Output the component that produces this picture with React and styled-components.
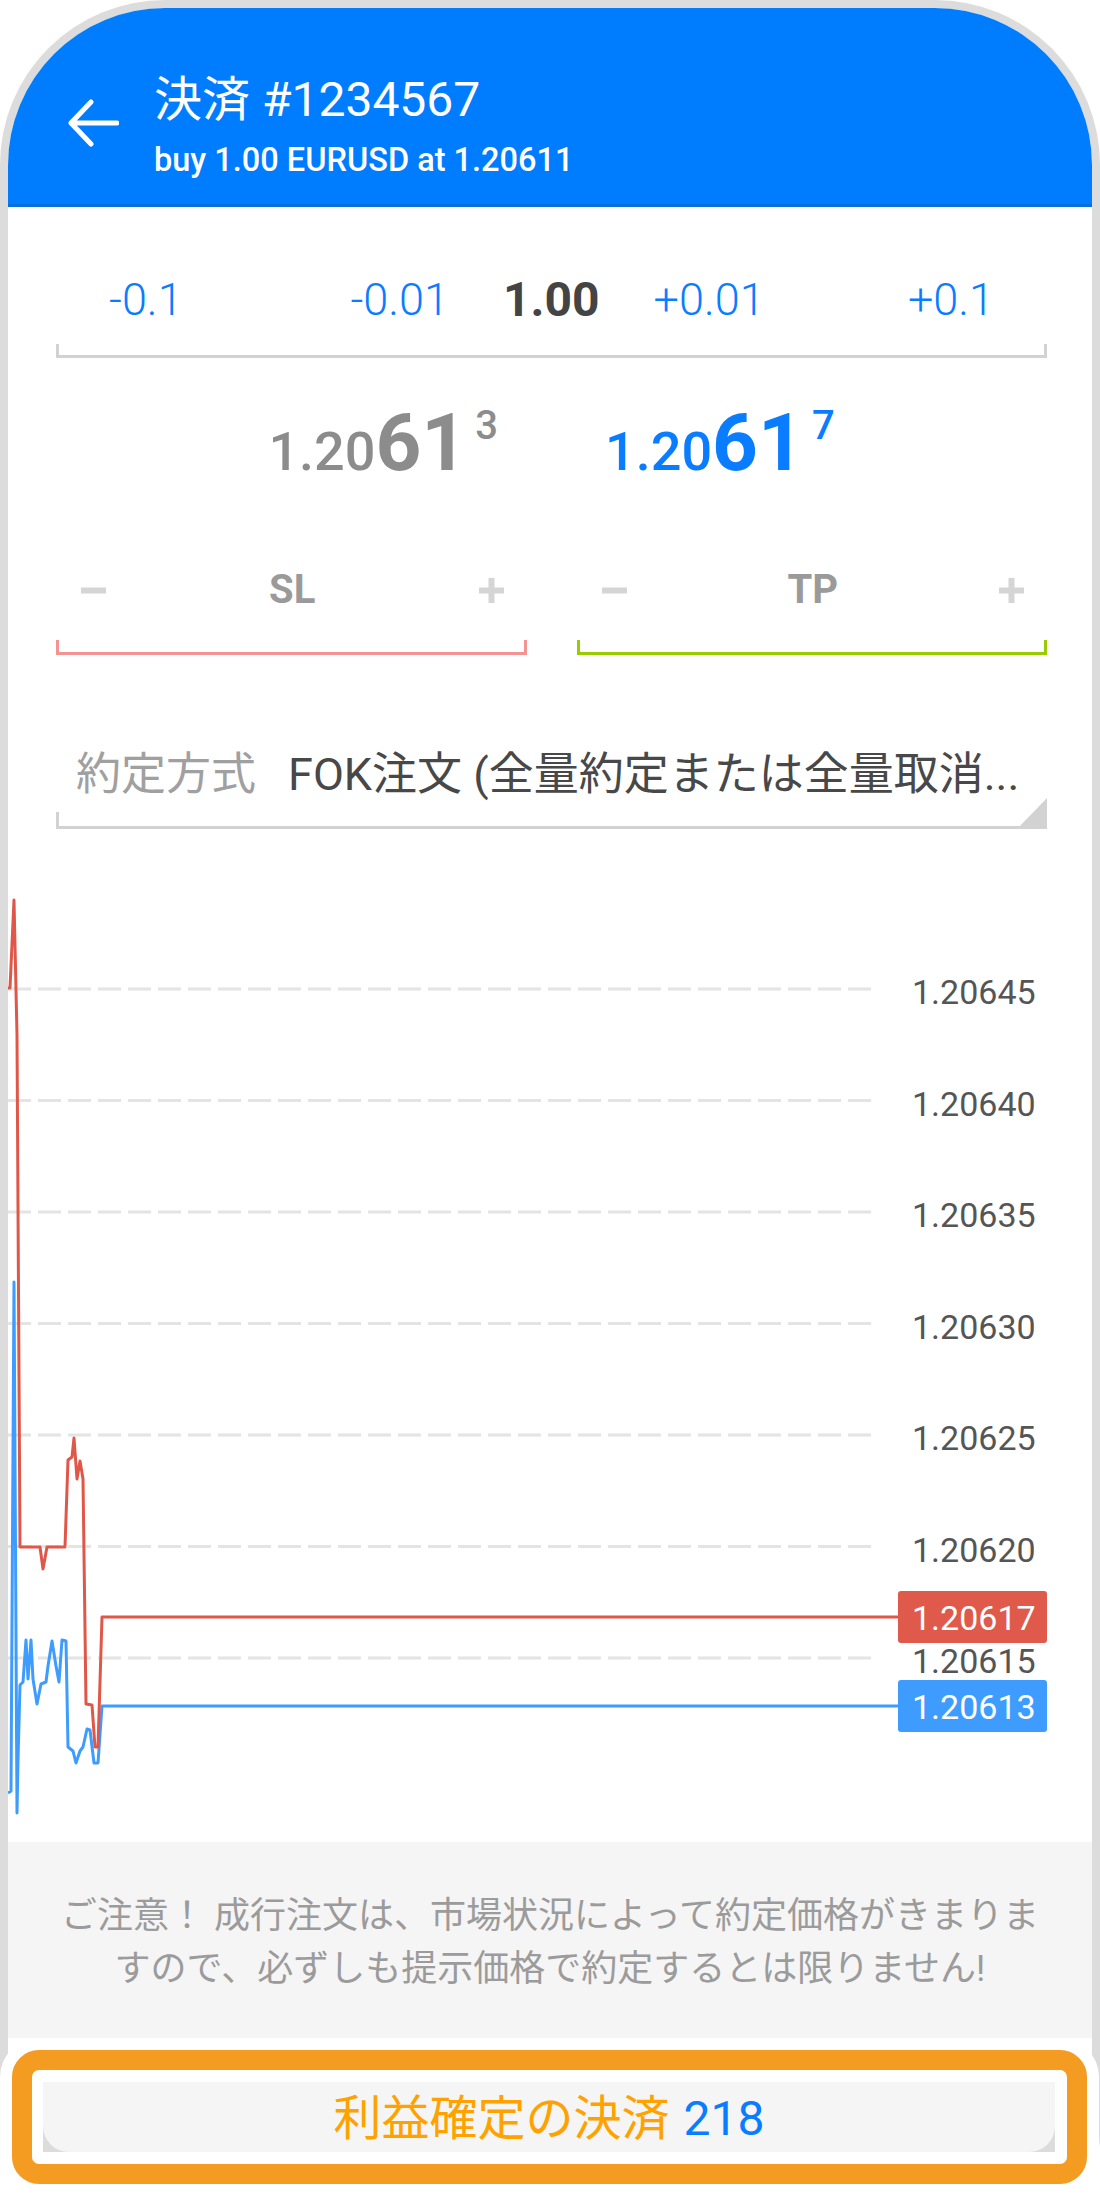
import React from 'react';
import styled, { createGlobalStyle } from 'styled-components';

const GlobalStyle = createGlobalStyle`
  html, body {
    margin: 0;
    padding: 0;
    background: #fff;
  }
  body {
    font-family: Roboto, "Noto Sans CJK JP", sans-serif;
  }
`;

const Frame = styled.div`
    box-sizing: border-box;
    width: 1100px;
    height: 2196px;
    border: 8px solid #dcdcdc;
    border-bottom: 0;
    border-radius: 165px 165px 60px 60px;
    display: flex;
    flex-direction: column;
`;

const Header = styled.header`
    box-sizing: border-box;
    height: 199px;
    flex-shrink: 0;
    background: #007dff;
    border-bottom: 3px solid #0b6fd9;
    border-radius: 157px 157px 0 0;
    display: flex;
    align-items: flex-start;
    gap: 35px;
    padding: 64px 0 0 59px;
    color: #fff;
`;

const BackIcon = styled.svg`
    margin-top: 27px;
    flex-shrink: 0;
`;

const TitleBlock = styled.div`
    display: flex;
    flex-direction: column;
`;

const Title = styled.h1`
    margin: 0;
    font-size: 48px;
    line-height: 56px;
    font-weight: 400;
`;

const Subtitle = styled.div`
    margin-top: 12px;
    font-size: 32.5px;
    line-height: 40px;
    font-weight: 500;
`;

const Content = styled.div`
    padding: 0 45px 0 48px;
`;

const LotRow = styled.div`
    margin-top: 67px;
    padding: 0 53px;
    display: grid;
    grid-template-columns: 1fr auto 1fr;
    align-items: center;
    font-size: 45px;
    line-height: 52px;
`;

const LotStep = styled.span`
    color: #0a7cff;
    font-weight: 300;
    justify-self: ${props => props.$align};
`;

const LotCenter = styled.div`
    display: flex;
    align-items: center;
    gap: 54px;
    margin-left: 12px;
`;

const LotValue = styled.span`
    font-size: 48px;
    font-weight: 700;
    color: #444;
`;

const Bracket = styled.div`
    box-sizing: border-box;
    height: ${props => props.$h}px;
    margin-top: ${props => props.$mt}px;
    border: 3px solid ${props => props.$color};
    border-top: 0;
`;

const PriceRow = styled.div`
    margin-top: 45px;
    display: flex;
    justify-content: center;
    gap: 107px;
`;

const Quote = styled.div`
    display: flex;
    align-items: baseline;
    color: ${props => props.$color};
`;

const QuoteHead = styled.span`
    font-size: 54px;
    line-height: 54px;
    font-weight: 500;
`;

const QuotePips = styled.span`
    font-size: 80px;
    line-height: 80px;
    font-weight: 700;
`;

const QuoteTail = styled.span`
    align-self: flex-start;
    margin: 3px 0 0 8px;
    font-size: 40px;
    line-height: 40px;
    font-weight: 500;
`;

const LevelRow = styled.div`
    margin-top: 83px;
    display: flex;
    gap: 50px;
`;

const Level = styled.div`
    flex: 1;
`;

const LevelControls = styled.div`
    height: 48px;
    display: flex;
    align-items: center;
    justify-content: space-between;
    padding: 0 23px 0 25px;
`;

const LevelLabel = styled.span`
    font-size: 40px;
    line-height: 48px;
    font-weight: 700;
    color: #9a9a9a;
`;

const FieldRow = styled.div`
    margin-top: 96px;
    height: 48px;
    display: flex;
    align-items: center;
    gap: 32px;
    padding-left: 20px;
    font-size: 45px;
    line-height: 48px;
    white-space: nowrap;
`;

const FieldLabel = styled.span`
    color: #a0a0a0;
`;

const FieldValue = styled.span`
    color: #484848;
`;

const FieldLine = styled.div`
    position: relative;
    box-sizing: border-box;
    margin-top: 13px;
    height: 17px;
    border-left: 3px solid #d2d2d2;
    border-bottom: 3px solid #d2d2d2;

    &::after {
        content: '';
        position: absolute;
        right: 0;
        bottom: -3px;
        border-left: 30px solid transparent;
        border-bottom: 31px solid #d2d2d2;
    }
`;

const ChartBox = styled.div`
    margin-top: 31px;
    height: 982px;
    flex-shrink: 0;

    svg {
        display: block;
    }
    text {
        font-family: Roboto, sans-serif;
        font-size: 34px;
    }
`;

const Notice = styled.div`
    box-sizing: border-box;
    height: 196px;
    flex-shrink: 0;
    padding-top: 48px;
    background: #f5f5f5;
    color: #9b9b9b;
    font-size: 36px;
    line-height: 53px;
    text-align: center;
`;

const Footer = styled.div`
    flex: 1;
    padding: 12px 5px 0 4px;
`;

const Highlight = styled.div`
    border: 20px solid #f49b21;
    border-radius: 27px;
    background: #fff;
    padding: 12px 12px 12px 11px;
    box-shadow: 0 0 0 12px #fff;
`;

const CloseButtonWrap = styled.div`
    height: 70px;
    background: #dcdcdc;
`;

const CloseButton = styled.button`
    width: 100%;
    height: 100%;
    border: 0;
    padding: 4px 0 0;
    margin: 0;
    background: #f5f5f5;
    border-radius: 0 0 26px 26px;
    display: flex;
    align-items: center;
    justify-content: center;
    gap: 14px;
    font-family: Roboto, "Noto Sans CJK JP", sans-serif;
    font-size: 48px;
    line-height: 60px;
`;

const ButtonText = styled.span`
    color: ${props => props.$color};
`;

const StepIcon = ({ plus }) => (
    <svg width="25" height="25" viewBox="0 0 25 25">
        <rect x="0" y="9.5" width="25" height="6" fill="#d5d5d5" />
        {plus && <rect x="9.5" y="0" width="6" height="25" fill="#d5d5d5" />}
    </svg>
);

const gridLevels = ['1.20645', '1.20640', '1.20635', '1.20630', '1.20625', '1.20620', '1.20615'];

const askLine = [
    [0, 128], [2, 128], [6, 40], [9, 175], [12, 687], [32, 687], [35, 709], [39, 687], [57, 687],
    [60, 600], [64, 597], [66, 578], [69, 619], [72, 601], [75, 619], [78, 844], [84, 845],
    [87, 887], [90, 887], [94, 757], [890, 757],
];

const bidLine = [
    [0, 933], [3, 931], [6, 422], [9, 953], [10, 900], [12, 825], [15, 822], [18, 780], [20, 819],
    [23, 780], [25, 819], [29, 844], [33, 824], [38, 822], [40, 806], [44, 781], [48, 806],
    [51, 822], [54, 780], [58, 781], [60, 887], [65, 891], [68, 903], [72, 891], [75, 887],
    [79, 869], [82, 870], [86, 903], [90, 903], [94, 846], [890, 846],
];

const toPoints = pts => pts.map(p => p.join(',')).join(' ');

const Chart = () => (
    <ChartBox>
        <svg width="1084" height="982" viewBox="0 0 1084 982">
            {gridLevels.map((label, i) => {
                const y = 129 + i * 111.5;
                return (
                    <g key={label}>
                        <line x1="0" y1={y} x2="865" y2={y} stroke="#e4e4e4" strokeWidth="3" strokeDasharray="23 7" />
                        <text x="904" y={y + 3} fill="#555" dominantBaseline="central">{label}</text>
                    </g>
                );
            })}
            <polyline points={toPoints(bidLine)} fill="none" stroke="#3f9cff" strokeWidth="3" strokeLinejoin="round" />
            <polyline points={toPoints(askLine)} fill="none" stroke="#e0574a" strokeWidth="3" strokeLinejoin="round" />
            <rect x="890" y={757 - 26} width="149" height="52" rx="3" fill="#e05a4b" />
            <text x="904" y={757 + 1} fill="#fff" dominantBaseline="central">1.20617</text>
            <rect x="890" y={846 - 26} width="149" height="52" rx="3" fill="#3f9cff" />
            <text x="904" y={846 + 1} fill="#fff" dominantBaseline="central">1.20613</text>
        </svg>
    </ChartBox>
);

const App = () => {
    return (
        <>
            <GlobalStyle />
            <Frame>
                <Header>
                    <BackIcon width="52" height="48" viewBox="0 0 52 48">
                        <path d="M4 24 H50 M24 3 L4 24 L24 45" fill="none" stroke="#fff" strokeWidth="5" strokeLinecap="round" strokeLinejoin="round" />
                    </BackIcon>
                    <TitleBlock>
                        <Title>決済 #1234567</Title>
                        <Subtitle>buy 1.00 EURUSD at 1.20611</Subtitle>
                    </TitleBlock>
                </Header>

                <Content>
                    <LotRow>
                        <LotStep $align="start">-0.1</LotStep>
                        <LotCenter>
                            <LotStep $align="center">-0.01</LotStep>
                            <LotValue>1.00</LotValue>
                            <LotStep $align="center">+0.01</LotStep>
                        </LotCenter>
                        <LotStep $align="end">+0.1</LotStep>
                    </LotRow>
                    <Bracket $h={14} $mt={18} $color="#d2d2d2" />

                    <PriceRow>
                        <Quote $color="#8c8c8c">
                            <QuoteHead>1.20</QuoteHead>
                            <QuotePips>61</QuotePips>
                            <QuoteTail>3</QuoteTail>
                        </Quote>
                        <Quote $color="#0a7cff">
                            <QuoteHead>1.20</QuoteHead>
                            <QuotePips>61</QuotePips>
                            <QuoteTail>7</QuoteTail>
                        </Quote>
                    </PriceRow>

                    <LevelRow>
                        <Level>
                            <LevelControls>
                                <StepIcon />
                                <LevelLabel>SL</LevelLabel>
                                <StepIcon plus />
                            </LevelControls>
                            <Bracket $h={15} $mt={26} $color="#f59292" />
                        </Level>
                        <Level>
                            <LevelControls>
                                <StepIcon />
                                <LevelLabel>TP</LevelLabel>
                                <StepIcon plus />
                            </LevelControls>
                            <Bracket $h={15} $mt={26} $color="#99cc00" />
                        </Level>
                    </LevelRow>

                    <FieldRow>
                        <FieldLabel>約定方式</FieldLabel>
                        <FieldValue>FOK注文 (全量約定または全量取消...</FieldValue>
                    </FieldRow>
                    <FieldLine />
                </Content>

                <Chart />

                <Notice>
                    ご注意！ 成行注文は、市場状況によって約定価格がきまりま<br />
                    すので、必ずしも提示価格で約定するとは限りません!
                </Notice>

                <Footer>
                    <Highlight>
                        <CloseButtonWrap>
                            <CloseButton>
                                <ButtonText $color="#ffa200">利益確定の決済</ButtonText>
                                <ButtonText $color="#0a7cff">218</ButtonText>
                            </CloseButton>
                        </CloseButtonWrap>
                    </Highlight>
                </Footer>
            </Frame>
        </>
    );
};

export default App;
